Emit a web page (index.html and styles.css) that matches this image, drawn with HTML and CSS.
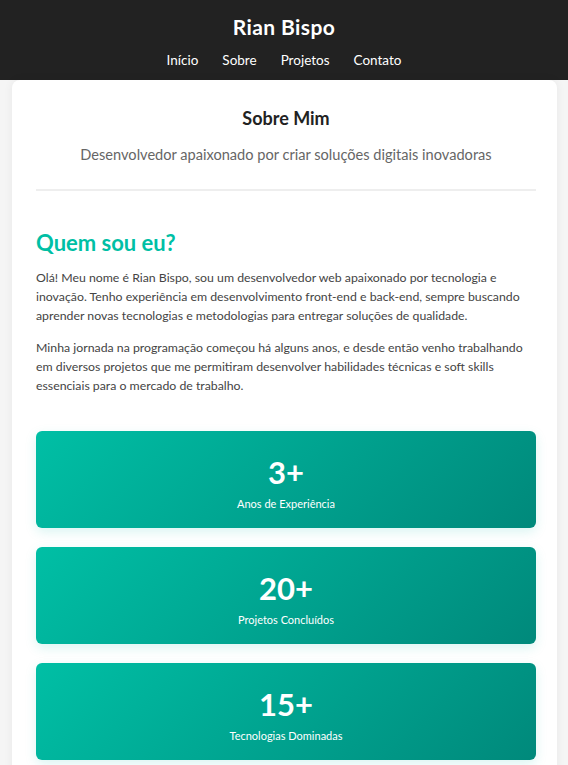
FILE: index.html
```html
<!DOCTYPE html>
<html lang="pt-BR">
<head>
<meta charset="utf-8">
<title>Rian Bispo - Sobre</title>
<link rel="stylesheet" href="styles.css">
</head>
<body>
<header class="site-header">
  <h1 class="brand">Rian Bispo</h1>
  <nav class="nav">
    <a href="#">Início</a>
    <a href="#">Sobre</a>
    <a href="#">Projetos</a>
    <a href="#">Contato</a>
  </nav>
</header>
<main class="card">
  <section class="intro">
    <h2 class="intro-title">Sobre Mim</h2>
    <p class="intro-sub">Desenvolvedor apaixonado por criar soluções digitais inovadoras</p>
  </section>
  <section class="about">
    <h3 class="about-title">Quem sou eu?</h3>
    <p>Olá! Meu nome é Rian Bispo, sou um desenvolvedor web apaixonado por tecnologia e inovação. Tenho experiência em desenvolvimento front-end e back-end, sempre buscando aprender novas tecnologias e metodologias para entregar soluções de qualidade.</p>
    <p>Minha jornada na programação começou há alguns anos, e desde então venho trabalhando em diversos projetos que me permitiram desenvolver habilidades técnicas e soft skills essenciais para o mercado de trabalho.</p>
  </section>
  <section class="stats">
    <div class="stat"><div class="stat-num">3+</div><div class="stat-label">Anos de Experiência</div></div>
    <div class="stat"><div class="stat-num">20+</div><div class="stat-label">Projetos Concluídos</div></div>
    <div class="stat"><div class="stat-num">15+</div><div class="stat-label">Tecnologias Dominadas</div></div>
  </section>
</main>
</body>
</html>
```
FILE: styles.css
```css
* { box-sizing: border-box; }
html, body { margin: 0; padding: 0; }
body {
  background: #f5f5f5;
  font-family: Lato, "Noto Sans", sans-serif;
  color: #333;
}
.site-header {
  background: #222;
  color: #fff;
  text-align: center;
  height: 80px;
  padding-top: 13px;
}
.brand {
  margin: 0;
  font-size: 21px;
  font-weight: 700;
  line-height: 28px;
  letter-spacing: 0.4px;
}
.nav {
  display: flex;
  justify-content: center;
  gap: 24px;
  margin-top: 9px;
}
.nav a {
  color: #fff;
  text-decoration: none;
  font-size: 13.5px;
  line-height: 20px;
}
.card {
  background: #fff;
  margin: 0 11px 0 12px;
  padding: 0 21px 24px 24px;
  border-radius: 8px 8px 0 0;
  box-shadow: 0 0 10px rgba(0,0,0,0.06);
}
.intro {
  text-align: center;
  padding: 26px 0 24px;
  border-bottom: 2px solid #eee;
}
.intro-title {
  margin: 0;
  font-size: 18px;
  line-height: 24px;
  color: #222;
}
.intro-sub {
  margin: 15px 0 0;
  font-size: 14.6px;
  line-height: 20px;
  color: #666;
}
.about { padding-top: 38px; }
.about-title {
  margin: 0 0 11px;
  color: #00bfa5;
  font-size: 22px;
  line-height: 28px;
}
.about p {
  margin: 0 0 13px;
  font-size: 12.3px;
  line-height: 19px;
  color: #444;
}
.stats {
  display: flex;
  flex-direction: column;
  gap: 19px;
  margin-top: 36px;
}
.stat {
  height: 97px;
  border-radius: 6px;
  background: linear-gradient(135deg, #00bfa5, #00897b);
  color: #fff;
  text-align: center;
  padding-top: 22px;
  box-shadow: 0 4px 12px rgba(0,191,165,0.15);
}
.stat-num {
  font-size: 31px;
  font-weight: 700;
  line-height: 38px;
}
.stat-label {
  margin-top: 6px;
  font-size: 11px;
  line-height: 14px;
}
```
